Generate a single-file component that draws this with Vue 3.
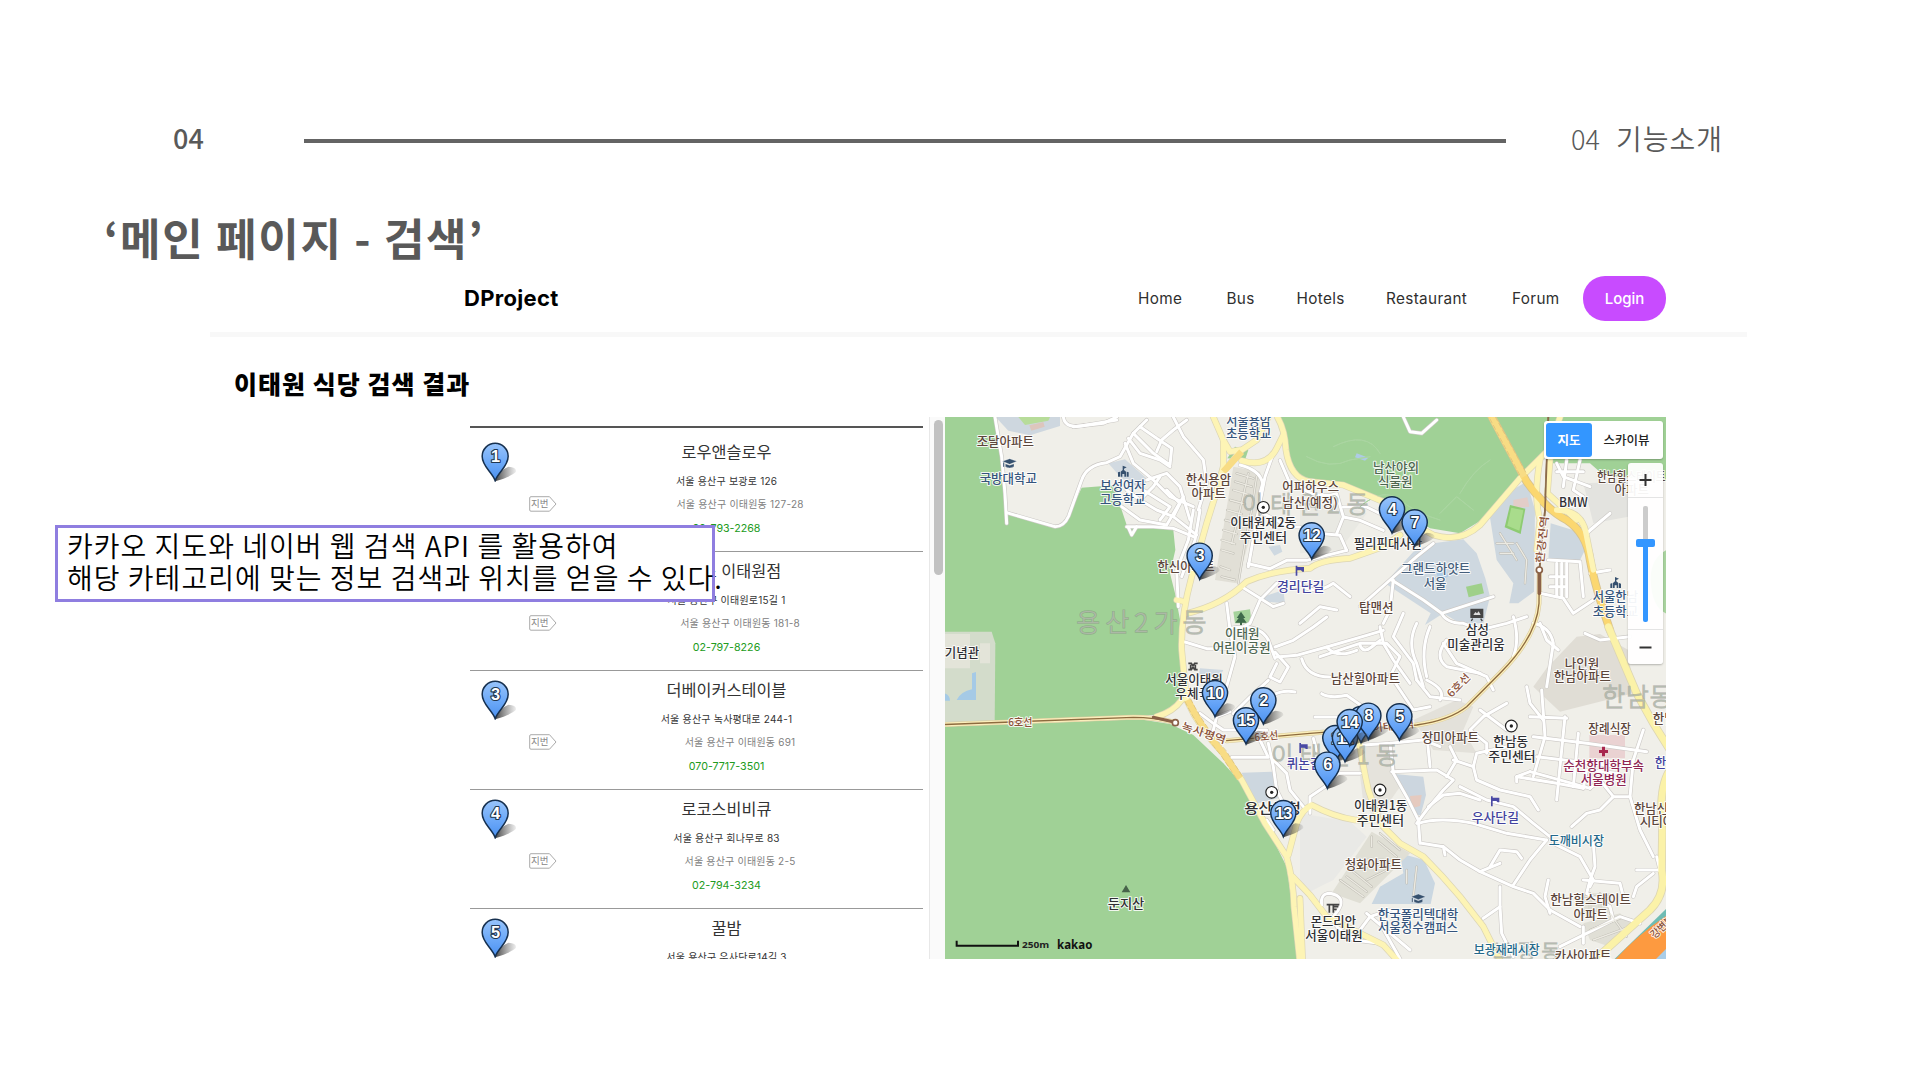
<script setup>
const nav = ['Home', 'Bus', 'Hotels', 'Restaurant', 'Forum']

const places = [
  { n: 1, name: '로우앤슬로우', road: '서울 용산구 보광로 126', lot: '서울 용산구 이태원동 127-28', tel: '02-793-2268' },
  { n: 2, name: '바토스 이태원점', road: '서울 용산구 이태원로15길 1', lot: '서울 용산구 이태원동 181-8', tel: '02-797-8226' },
  { n: 3, name: '더베이커스테이블', road: '서울 용산구 녹사평대로 244-1', lot: '서울 용산구 이태원동 691', tel: '070-7717-3501' },
  { n: 4, name: '로코스비비큐', road: '서울 용산구 회나무로 83', lot: '서울 용산구 이태원동 2-5', tel: '02-794-3234' },
  { n: 5, name: '꿀밤', road: '서울 용산구 우사단로14길 3' }
]

// The map is drawn on several tiles; each tile has its own local origin.
const tiles = { a: 'translate(0 0)', b: 'translate(1080 0)', c: 'translate(0 810)', d: 'translate(1080 810)', e: 'translate(720 621)', f: 'translate(720 21)' }

const areas = [
  ['a', '#a0d196', 'M0 0H165L190 220L200 305L345 350Q370 350 385 320L425 233L530 225L545 300L560 345L640 348L700 360L706 420L690 490L705 550L722 640L728 870Q715 905 640 915L0 945Z'],
  ['c', '#a0d196', 'M0 140L600 118L690 132L760 165L850 250L905 310L980 440L1040 560L1060 700L1072 860H0Z'],
  ['a', '#d3dccb', 'M0 665H155L166 700L164 938L0 942Z'],
  ['a', '#e3e4d9', 'M14 672H90V775H14ZM120 700H150V760H120Z'],
  ['a', '#a5cae6', 'M96 790L108 786V870H50Q62 845 96 838ZM14 850Q30 855 30 872H14Z'],
  ['b', '#a0d196', 'M-65 0L-35 140L0 200L140 222L240 262L390 355L480 370L545 330L670 195L735 120L760 0Z'],
  ['b', '#a0d196', 'M740 0H1110V215L910 195L870 160H740Z'],
  ['b', '#a9d49f', 'M1110 415Q1050 440 1052 510Q1055 600 1110 615Z'],
  ['a', '#ced7df', 'M167 21H360V48L270 76L205 62Z'],
  ['a', '#b7dc9a', 'M235 21H330L325 32L255 45Z'],
  ['a', '#ddc6bd', 'M268 46L310 36L314 50L274 62Z'],
  ['a', '#d2dae1', 'M505 160L555 148L625 210L600 235L545 205Z'],
  ['a', '#a0d196', 'M862 145L885 110L925 120L915 150Z'],
  ['a', '#e1dfd6', 'M880 170L960 185L975 230L890 520L825 510Z'],
  ['a', '#cfd9e1', 'M985 410L1020 405L1027 425L1003 437ZM970 560L1030 540L1035 580L975 575ZM780 775L850 780L840 800L775 800Z'],
  ['a', '#a5d39b', 'M880 605L930 598L935 640L885 640Z'],
  ['b', '#cdd7df', 'M620 250L680 215L705 300L702 545L655 580H628L640 520L590 450L568 310Z'],
  ['b', '#e3cdc8', 'M640 270L682 262L688 290L640 295Z'],
  ['b', '#8ecb72', 'M630 285L676 296L662 372L614 352Z'],
  ['b', '#a9dc8c', 'M634 293L670 301L658 362L622 347Z'],
  ['b', '#cdd7df', 'M752 340L850 370L860 410L840 450H745Z'],
  ['b', '#ced8e0', 'M340 425L400 400L490 388L530 430L556 505L570 560L550 640L480 640L430 610L375 645L392 610L255 520Z'],
  ['b', '#9fd08a', 'M498 530L545 520L552 550L506 562Z'],
  ['b', '#aecbe6', 'M410 490L438 478L445 500L415 512ZM170 130L205 143L195 152L165 142Z'],
  ['b', '#e0ddd5', 'M740 775L830 680L900 672L985 720L1000 850L780 905L700 830Z'],
  ['b', '#e3e3df', 'M850 220L990 215L985 320L880 340Z'],
  ['b', '#e9e9e3', 'M0 290L110 280L200 310L120 420L0 430Z'],
  ['d', '#e3e1da', 'M340 120L470 60L520 80L490 150L530 220L400 210Z'],
  ['d', '#e5e3dc', 'M170 200L190 370L230 420L300 320L270 190Z'],
  ['c', '#cdd7df', 'M905 278L1000 275L1014 355L945 372Z'],
  ['d', '#ccd6df', 'M285 282L370 290L378 345L362 405H345Z'],
  ['d', '#e5cabf', 'M330 348L365 345L360 378L335 385Z'],
  ['d', '#cad7e1', 'M300 520L372 540L405 610L392 672H215L240 620L310 580Z'],
  ['d', '#e0dfd5', 'M215 455L330 520L180 670L95 640Z'],
  ['d', '#ead2d2', 'M868 165H975V235H868Z'],
  ['d', '#e0dfd6', 'M850 640H930V700H850ZM850 730L960 700L1010 740L930 800L870 780Z'],
  ['d', '#e9e9e6', 'M0 400L150 425L200 470L100 600L20 640L0 600Z'],
  ['d', '#6fbcb4', 'M920 860L1110 675V860Z'],
  ['d', '#fd9a40', 'M928 860Q1000 770 1110 700V860Z'],
  ['d', '#a9cde8', 'M1045 860L1110 795V860Z']
]

// [tile, kind, path]
const roads = [
  // narrow streets, north-west
  ['a', 's', 'M165 21L185 140L195 250L200 340'], ['a', 's', 'M200 308L345 350Q372 350 386 318L425 210Q440 165 500 158L540 140L580 70L620 30'],
  ['a', 's', 'M370 21Q375 60 440 45L530 30'], ['a', 's', 'M530 21L490 40L400 50'],
  ['a', 's', 'M565 85L600 130L660 150L690 170'], ['a', 's', 'M580 70L640 130L690 165L695 115L650 85L600 50'],
  ['a', 's', 'M650 125L665 90L700 60L740 30'], ['a', 's', 'M700 21L730 80L790 150L800 220L775 300'],
  ['a', 's', 'M555 100L580 160L640 210L690 260L760 290'], ['a', 's', 'M620 210L680 190L720 230L750 330'],
  ['a', 's', 'M560 240L600 270L640 230L660 200'], ['a', 's', 'M600 270L650 300L700 320L720 280L680 240'],
  ['a', 's', 'M545 290L600 330L680 345L730 260'], ['a', 's', 'M560 350L640 350L700 355L760 380'], ['a', 's', 'M565 352L575 375L590 350'],
  ['a', 's', 'M610 240L690 290L660 330'], ['a', 's', 'M700 320L770 375'], ['a', 's', 'M760 300L745 390L710 480L715 590'],
  ['a', 's', 'M780 300L765 390L725 500'], ['a', 's', 'M1000 130L975 200L950 330L925 470'], ['a', 's', 'M900 165Q960 180 968 220L960 250'],
  // apartment rows
  ['a', 't', 'M890 190L940 205M885 215L935 230M880 240L930 255M870 270L915 282M862 300L905 312M855 330L900 342M850 360L890 372M845 390L885 402M845 420L880 430M842 470L870 480M845 500L885 510'],
  ['a', 't', 'M925 190L900 300L875 400M950 200L935 300L915 400L895 520'],
  // centre-north
  ['f', 's', 'M205 440L270 455L320 430L380 430L500 400'], ['f', 's', 'M250 290L330 330L360 330M430 350L480 355L500 400'], ['f', 's', 'M350 200Q400 250 470 230L490 300L470 350'],
  ['f', 's', 'M490 300L540 310L610 340'], ['f', 's', 'M490 270L560 270L620 300'], ['f', 's', 'M300 130L330 200'],
  ['a', 's', 'M905 530L960 565L1000 590L1030 580'], ['a', 's', 'M1010 520L960 570L930 640L900 655'], ['a', 's', 'M860 580L870 660L885 740L860 830'],
  ['a', 's', 'M870 655Q960 640 985 690L1005 745'],
  ['e', 's', 'M15 75L80 95L150 95'], ['e', 's', 'M285 90L340 70L400 30L440 0'], ['e', 's', 'M290 120L350 115L440 90L560 55L610 40'], ['e', 's', 'M285 105L325 150L300 195L270 180L290 140'],
  ['e', 's', 'M160 290L210 240L265 190'], ['e', 's', 'M250 250Q300 215 345 225'], ['e', 's', 'M440 90Q470 125 530 100'], ['e', 's', 'M365 125Q380 180 450 180'],
  ['e', 's', 'M425 230Q450 245 500 235L550 270'], ['e', 's', 'M405 300H470'], ['e', 's', 'M540 85Q550 110 575 90L600 70'],
  ['b', 's', 'M180 590L270 510L350 440L400 400'], ['b', 's', 'M275 510L370 570L425 610L580 560'], ['b', 's', 'M60 740L180 700L260 700L300 740L270 800'],
  ['b', 's', 'M0 640L60 590L110 600M240 650L250 700L280 750L330 820'], ['b', 's', 'M250 640L270 600L280 510'], ['b', 's', 'M310 610L280 680L340 760L350 810'],
  ['b', 's', 'M350 640Q320 700 350 760L370 830'], ['b', 's', 'M390 650Q360 720 380 800'], ['b', 's', 'M425 610Q440 640 490 640L540 660L620 640L680 620'],
  ['b', 's', 'M430 700L470 760L560 800L580 840'], ['b', 's', 'M440 690Q400 740 440 770L540 790'], ['b', 's', 'M640 620Q660 690 640 740'], ['b', 's', 'M720 640L740 690L775 720'],
  ['b', 's', 'M720 550L790 565L820 610L880 570'], ['b', 's', 'M700 640Q750 650 760 700L740 830'], ['b', 's', 'M0 520Q40 560 100 520L150 560'],
  ['b', 's', 'M745 450L840 455L850 560'], ['b', 's', 'M770 460V560M785 460V560M800 460V560M750 500H800M750 530H800'],
  ['b', 's', 'M770 160L790 200L870 230M800 150L790 230M840 150L820 240L850 260M770 185H850'], ['b', 's', 'M860 370L930 310L870 360M870 490L930 480'],
  ['b', 's', 'M855 670L900 690L990 680'], ['b', 's', 'M310 21L330 65L365 70L410 30'],
  ['b', 't', 'M600 430H640M590 400H640M600 370L650 450M650 400L680 450L675 520'],
  ['b', 'g', 'M20 140Q90 180 150 150L210 140M180 290Q250 230 300 270T420 330M420 310L470 260L520 300M480 250Q520 180 570 150M100 110Q200 60 240 130'],
  // centre
  ['c', 's', 'M780 100L820 130L850 150L980 150'], ['c', 's', 'M820 150L830 110L870 95'],
  ['c', 's', 'M875 232H985L960 180L950 150'], ['c', 's', 'M985 190L1000 260L1010 330L1040 390'], ['c', 's', 'M1000 240L1040 280L1050 330L1090 380'], ['c', 's', 'M980 420L1000 450'],
  ['c', 's', 'M1120 175L1135 230'],
  ['d', 's', 'M30 400L30 350L90 310'], ['d', 's', 'M100 280H180'], ['d', 's', 'M190 195L270 190L370 180L420 200'],
  ['d', 's', 'M280 0L340 90L390 80'], ['d', 's', 'M350 0L390 50L480 60'], ['d', 's', 'M380 0Q440 30 420 60'], ['d', 's', 'M380 160L390 260M450 200L470 240L440 290'],
  ['d', 's', 'M275 275L410 270L460 300L430 330L380 390L350 430'], ['d', 's', 'M270 190L280 280L320 350L355 420L360 490'], ['d', 's', 'M460 240L520 260L530 220L620 200'],
  ['d', 's', 'M520 260L530 300L600 330L690 350L715 390'], ['d', 's', 'M385 380L430 345L480 340L540 360'], ['d', 's', 'M480 320L560 360L640 380L700 430L750 470'],
  ['d', 's', 'M355 430Q420 410 520 430L620 460L740 480'], ['d', 's', 'M365 490L430 500L435 525'], ['d', 's', 'M430 500L480 540L540 575L600 550'],
  ['d', 's', 'M540 575L640 620L700 640L750 690L840 740'], ['d', 's', 'M570 560L600 510L650 515L665 535'], ['d', 's', 'M740 480L690 540L640 615'],
  ['d', 's', 'M600 620L600 680L550 715'], ['d', 's', 'M600 680L605 760L640 830'], ['d', 's', 'M745 600L735 650L750 700'],
  ['d', 's', 'M760 490L840 530L880 600L870 620'], ['d', 's', 'M880 490L885 560L870 600'], ['d', 's', 'M850 600L960 610L970 650'], ['d', 's', 'M870 600L860 640L930 680L940 720'],
  ['d', 's', 'M700 170L860 190L1040 215'], ['d', 's', 'M710 230L1000 265'], ['d', 's', 'M690 275L870 325'], ['d', 's', 'M650 290L770 310L850 325'], ['d', 's', 'M650 305V290L690 275'],
  ['d', 's', 'M725 30L735 170L700 290M795 110L770 360M835 160L820 320M690 110L800 115'], ['d', 's', 'M680 20L690 70L730 120'],
  ['d', 's', 'M870 325L900 300L940 350H990L1000 240L1030 150'], ['d', 's', 'M940 350L900 390L860 400L815 440'], ['d', 's', 'M990 350L1020 450L1060 530'],
  ['d', 's', 'M850 325L860 270L950 280'], ['d', 's', 'M1010 570H1080L1070 530'], ['d', 's', 'M1060 580L1010 620L1000 650'],
  ['d', 's', 'M780 800L860 760L960 710L1020 730'], ['d', 's', 'M850 740L850 790'], ['d', 's', 'M620 70L550 110L510 150L560 190L560 220'], ['d', 's', 'M540 90L620 150'],
  ['d', 's', 'M65 675Q60 640 90 640Q140 650 115 690L100 710'], ['d', 's', 'M110 740L160 780L240 790'], ['d', 's', 'M180 750L210 710L270 690L340 700'], ['d', 's', 'M200 700L330 810M240 730L300 836'],
  ['d', 't', 'M215 470V500M240 460L300 510M235 485L290 530M200 540L250 540L260 570L200 600M120 600L190 650M140 590L200 635M160 575L215 620M320 570L320 610M350 560L340 650'],
  ['d', 't', 'M855 650H925M870 640V700M900 640V700M870 750L960 715M880 780L990 740M930 700L980 770'],
  // avenues
  ['c', 'y', 'M650 110Q700 95 725 60'],
  ['a', 'y', 'M733 805L725 720Q722 620 755 500L800 340L825 260L850 170V90L820 21'],
  ['a', 'y', 'M850 90L870 125L900 120M850 185L905 120L950 90L985 21'], ['a', 'y', 'M905 152Q980 175 1010 115L1030 75'],
  ['a', 'y', 'M1012 21Q1035 60 1038 120Q1050 205 1110 215L1210 225L1330 275Q1420 345 1480 375Q1560 400 1620 345L1740 205L1830 115L1860 21'],
  ['a', 'y', 'M735 612Q850 585 920 515Q1000 480 1110 475Q1140 450 1230 445L1330 410L1380 375'],
  ['a', 'y', 'M710 570L735 575'],
  ['c', 'y', 'M733 -5L740 60Q780 150 850 220L905 300L975 430L1040 530Q1060 600 1062 680L1080 850'],
  ['c', 'y', 'M1045 525L1070 430Q1085 390 1115 375Q1180 410 1245 420L1290 420'],
  ['c', 'y', 'M1058 590L1110 645L1160 710L1250 755L1330 795L1380 850'],
  ['d', 'y', 'M172 150Q185 240 205 330L240 430L300 490L370 530Q430 590 480 650L550 740L605 850'],
  ['d', 'y', 'M0 655L8 850'],
  ['d', 'Y', 'M1110 270Q1075 320 1087 450L1085 570Q1100 640 1050 690L900 825'],
  ['b', 'y', 'M750 150L742 250L830 330'], ['b', 'y', 'M720 150Q700 260 720 330L710 420'],
  ['b', 'o', 'M570 10L680 215Q740 300 800 330Q860 370 870 450Q885 530 930 660'], ['b', 'y', 'M770 300Q850 300 860 380L880 480'],
  ['b', 'Y', 'M925 650L1010 850L1060 940L1110 1020'],
  // metro line 6
  ['c', 'm', 'M0 134L580 112Q640 112 705 127'], ['c', 'm', 'M860 182L1110 160L1430 135Q1530 120 1580 80L1680 -20Q1790 -130 1797 -230L1798 -330'],
  ['b', 'M', 'M718 550V480L735 300L745 21']
]
const style = {
  s: { c: '#cbc8c5', w: 12.5, f: '#ffffff', i: 9 },
  t: { c: '#bdbbb2', w: 7, f: '#eceae2', i: 4 },
  g: { c: '#abd6a2', w: 3, f: '#abd6a2', i: 3 },
  y: { c: '#dcd5b4', w: 20, f: '#fdf4b5', i: 16 },
  Y: { c: '#dcd5b4', w: 25, f: '#fbf2a8', i: 20 },
  o: { c: '#d6c28e', w: 25, f: '#fbd770', i: 20 },
  m: { c: '#d9cb9e', w: 15, f: '#fbeebb', i: 12 },
  M: { c: '#8b6a4a', w: 5, f: '#8b6a4a', i: 5 }
}
const metro = [
  ['c', 'M0 134L580 112Q640 112 705 127'],
  ['c', 'M860 182L1110 160L1430 135Q1530 120 1580 80L1680 -20Q1790 -130 1797 -230L1798 -330']
]

// [tile, text, centre x, baseline y, width, colour class, size]
const labels = [
  ['a', '조달아파트', 196, 109, 172, 'brown'], ['a', '국방대학교', 205, 222, 172, 'navy'],
  ['a', '보성여자', 549, 243, 136, 'navy'], ['a', '고등학교', 548, 284, 136, 'navy'],
  ['a', '서울용암', 926, 46, 134, 'navy'], ['a', '초등학교', 926, 85, 136, 'navy'],
  ['a', '한신용암', 805, 225, 136, 'brown'], ['a', '아파트', 806, 267, 103, 'brown'],
  ['a', '이태원제2동', 970, 352, 198, 'dark'], ['a', '주민센터', 970, 397, 142, 'dark'],
  ['a', '한신아파트', 738, 484, 172, 'brown'], ['a', '경리단길', 1082, 545, 142, 'violet'],
  ['a', '이태원', 907, 687, 104, 'olive'], ['a', '어린이공원', 905, 729, 174, 'olive'],
  ['a', '기념관', 66, 742, 103, 'dark'], ['a', '서울이태원', 762, 825, 172, 'dark'], ['c', '우체국', 758, 57, 104, 'dark'],
  ['a', '어퍼하우스', 1112, 246, 170, 'brown'], ['a', '남산(예정)', 1110, 293, 166, 'brown'],
  ['b', '남산야외', 288, 187, 138, 'olive'], ['b', '식물원', 286, 231, 104, 'olive'],
  ['b', '필리핀대사관', 264, 417, 206, 'dark'], ['b', '그랜드하얏트', 407, 491, 208, 'slate'], ['b', '서울', 405, 536, 68, 'slate'],
  ['b', '탑맨션', 229, 609, 104, 'brown'], ['b', '삼성', 532, 675, 70, 'dark'], ['b', '미술관리움', 528, 719, 172, 'dark'],
  ['b', '남산힐아파트', 196, 822, 208, 'brown'], ['b', 'BMW', 820, 293, 86, 'dark'],
  ['b', '한남힐스테이트', 994, 215, 206, 'brown'], ['b', '아파트', 995, 255, 103, 'brown'],
  ['b', '서울한남', 946, 576, 136, 'navy'], ['b', '초등학교', 946, 619, 136, 'navy'],
  ['b', '나인원', 846, 775, 104, 'brown'], ['b', '한남아파트', 847, 816, 172, 'brown'],
  ['c', '용산구청', 998, 400, 170, 'dark', 42], ['c', '퀴논길', 1092, 266, 104, 'violet'], ['c', '둔지산', 558, 686, 110, 'dark'],
  ['d', '장미아파트', 451, 188, 172, 'brown'], ['d', '한남동', 632, 200, 104, 'dark'], ['d', '주민센터', 636, 245, 142, 'dark'],
  ['d', '장례식장', 929, 160, 128, 'brown'], ['d', '순천향대학부속', 911, 271, 242, 'wine'], ['d', '서울병원', 911, 313, 138, 'wine'],
  ['d', '이태원1동', 242, 391, 160, 'dark'], ['d', '주민센터', 241, 436, 142, 'dark'], ['d', '우사단길', 586, 427, 142, 'violet'],
  ['d', '도깨비시장', 829, 496, 166, 'teal'], ['d', '청화아파트', 220, 568, 172, 'brown'],
  ['d', '몬드리안', 100, 740, 136, 'dark'], ['d', '서울이태원', 102, 783, 172, 'dark'],
  ['d', '한국폴리텍대학', 354, 719, 242, 'navy'], ['d', '서울정수캠퍼스', 354, 759, 240, 'navy'],
  ['d', '한남힐스테이트', 872, 674, 242, 'brown'], ['d', '아파트', 872, 718, 103, 'brown'],
  ['d', '보광재래시장', 620, 823, 198, 'teal'], ['d', '카사아파트', 849, 841, 170, 'brown'],
  ['d', '한남시', 1110, 132, 104, 'brown'], ['d', '한빛길', 1116, 264, 104, 'violet'], ['d', '한남신동', 1070, 401, 136, 'brown'], ['d', '시티아파트', 1106, 441, 174, 'brown']
]
const districts = [
  ['a', '용산2가동', 604, 665, 390, 78], ['a', '이태원2동', 1095, 308, 380, 70], ['c', '이태원1동', 1184, 252, 380, 72],
  ['d', '한남동', 1012, 78, 210, 74], ['d', '보광동', 680, 836, 200, 60]
]
const metroNames = [
  ['c', '6호선', 241, 137, 72, 0], ['c', '녹사평역', 788, 170, 138, 18], ['c', '6호선', 980, 180, 72, -6],
  ['d', '6호선', 484, 24, 84, -46], ['b', '한강진역', 738, 390, 142, -84], ['d', '이태원역', 281, 149, 126, -6], ['d', '강변북로', 1104, 740, 110, -42]
]
const pins = [
  [779, 508, 3], [1115, 447, 12], [1356, 369, 4], [1424, 408, 7], [825, 920, 10], [970, 942, 2], [918, 1002, 15],
  [1378, 990, 5], [1263, 998, 9], [1285, 988, 8], [1186, 1055, 1], [1215, 1055, 11], [1229, 1007, 14], [1162, 1135, 6], [1030, 1280, 13]
]
const offices = [['a', 970, 292], ['c', 995, 337], ['d', 634, 138], ['d', 240, 330]]
const pinPath = 'M0 0C-10 -27 -39 -42 -39 -73A39 39 0 0 1 39 -73C39 -42 10 -27 0 0Z'
</script>

<template>
  <main class="slide">
    <header class="slide-head">
      <span class="page-no">04</span>
      <span class="rule"></span>
      <span class="chapter"><i>04</i>기능소개</span>
    </header>
    <h1 class="slide-title">‘메인 페이지 - 검색’</h1>

    <section class="site">
      <div class="topbar">
        <strong class="brand">DProject</strong>
        <nav class="menu">
          <a v-for="(item, k) in nav" :key="item" :class="'n' + k">{{ item }}</a>
        </nav>
        <button class="login">Login</button>
      </div>
      <h2 class="result-title">이태원 식당 검색 결과</h2>

      <div class="content">
        <ul class="places">
          <li v-for="p in places" :key="p.n" class="place">
            <svg class="pin" viewBox="-42 -116 110 120">
              <defs>
                <linearGradient id="pin-blue" x1="0" y1="0" x2="0" y2="1">
                  <stop offset="0" stop-color="#98c4fb" /><stop offset=".55" stop-color="#6ba8f8" /><stop offset="1" stop-color="#4a90f0" />
                </linearGradient>
                <linearGradient id="pin-shade" x1="0" y1="0" x2="1" y2="0">
                  <stop offset="0" stop-color="#222" stop-opacity=".85" /><stop offset="1" stop-color="#555" stop-opacity=".1" />
                </linearGradient>
              </defs>
              <path d="M0 2Q8 -30 40 -42Q66 -40 62 -26Q48 -12 0 2Z" fill="url(#pin-shade)" />
              <path :d="pinPath" class="pin-body" />
              <text x="0" y="-55" class="pin-no">{{ p.n }}</text>
            </svg>
            <div class="name">{{ p.name }}</div>
            <div class="road">{{ p.road }}</div>
            <div v-if="p.lot" class="lot-row">
              <span class="lot-tag">
                <svg viewBox="0 0 28 16"><path d="M2 .7H20.5L27 8L20.5 15.2H2Q.7 15.2 .7 14V2Q.7 .7 2 .7Z" /></svg>
                <em>지번</em>
              </span>
              <span class="lot">{{ p.lot }}</span>
            </div>
            <div v-if="p.tel" class="tel">{{ p.tel }}</div>
          </li>
        </ul>
        <div class="scroll"><span class="thumb"></span></div>

        <div class="map">
          <svg class="canvas" viewBox="15 21 2163 1626" preserveAspectRatio="none">
            <rect x="0" y="0" width="2200" height="1700" fill="#f0efe9" />
            <path v-for="(r, k) in areas" :key="'ar' + k" :transform="tiles[r[0]]" :fill="r[1]" :d="r[2]" />
            <g fill="none" stroke-linejoin="round" stroke-linecap="round">
              <path v-for="(r, k) in roads" :key="'rc' + k" :transform="tiles[r[0]]" :d="r[2]" :stroke="style[r[1]].c" :stroke-width="style[r[1]].w" />
              <path v-for="(r, k) in roads" :key="'rf' + k" :transform="tiles[r[0]]" :d="r[2]" :stroke="style[r[1]].f" :stroke-width="style[r[1]].i" />
              <path v-for="(r, k) in metro" :key="'me' + k" :transform="tiles[r[0]]" :d="r[1]" stroke="#8d6b3f" stroke-width="4" />
              <path transform="translate(0 810)" d="M640 112L705 127" stroke="#8b6248" stroke-width="9" />
              <path transform="translate(1080 0)" d="M718 480V550" stroke="#8b6248" stroke-width="11" />
              <path d="M1655 21L1752 200M743 870Q780 950 850 1030L900 1105M850 185L905 125" stroke="#f8dc84" stroke-width="20" stroke-linecap="butt" />
              <path d="M1650 27L1742 200M1666 21L1762 195M735 875Q775 955 842 1035L892 1110M752 867Q790 945 858 1022L908 1100" stroke="#dcc27c" stroke-width="2.5" stroke-dasharray="13 9" />
            </g>
            <g class="station">
              <circle cx="706" cy="938" r="9" /><circle cx="1798" cy="480" r="9" />
            </g>

            <text v-for="(l, k) in districts" :key="'di' + k" :transform="tiles[l[0]]" :x="l[2]" :y="l[3]" :textLength="l[4]" class="district" :font-size="l[5]">{{ l[1] }}</text>
            <text v-for="(l, k) in metroNames" :key="'mn' + k" :transform="tiles[l[0]] + ' translate(' + l[2] + ' ' + l[3] + ') rotate(' + l[5] + ')'" :textLength="l[4]" lengthAdjust="spacingAndGlyphs" class="label metro">{{ l[1] }}</text>
            <text v-for="(l, k) in labels" :key="'la' + k" :transform="tiles[l[0]]" :x="l[2]" :y="l[3] - 2" :textLength="l[4]" lengthAdjust="spacingAndGlyphs" :font-size="l[6] || 38" :class="['label', l[5]]">{{ l[1] }}</text>

            <g v-for="(o, k) in offices" :key="'of' + k" :transform="tiles[o[0]]">
              <circle :cx="o[1]" :cy="o[2]" r="17.5" fill="#fff" stroke="#222" stroke-width="3.5" /><circle :cx="o[1]" :cy="o[2]" r="5" fill="#222" />
            </g>
            <!-- colleges -->
            <g v-for="t in ['translate(209 160)', 'translate(1435 1466)']" :key="t" :transform="t" fill="#35506e" stroke="#fff" stroke-width="1">
              <path d="M0 -14L22 -6L0 3L-22 -6Z" /><path d="M-13 1L0 6L13 1V10Q0 18 -13 10ZM-20 -3H-16V11H-20Z" />
            </g>
            <!-- schools -->
            <g v-for="t in ['translate(550 185)', 'translate(2027 519)']" :key="t" :transform="t" fill="#35506e">
              <path d="M-2 -18L10 -13L2 -9V-5L8 0V15H3V7H-3V15H-8V0L-2 -5ZM-16 2L-10 0V15H-16ZM16 2L10 0V15H16Z" />
            </g>
            <!-- themed streets -->
            <g v-for="t in ['translate(1079 482)', 'translate(1090 1014)', 'translate(1665 1174)']" :key="t" :transform="t" fill="#4a4aa5">
              <path d="M-12 -15H-7V-11H13V3H8L4 -1H-7V15H-12Z" />
            </g>
            <path d="M903 605L916 624H910L920 638H906V645H900V638H886L896 624H890Z" fill="#3f6a4b" />
            <path d="M558 1425L571 1447H545Z" fill="#47634a" />
            <path d="M1986 1010H1995V1020H2004V1029H1995V1039H1986V1029H1977V1020H1986Z" fill="#a8264e" />
            <path d="M1593 598H1628V622H1593ZM1598 626L1594 633M1622 626L1627 633" fill="#444" stroke="#444" stroke-width="4" />
            <path d="M1600 615L1606 606L1611 610L1616 604L1622 615Z" fill="#ddd" />
            <path d="M745 760H754L759 768L764 760H773M745 779H754L759 771L764 779H773M752 764V776M766 764V776" fill="none" stroke="#444" stroke-width="5" />
            <path d="M1160 1484H1198M1168 1484V1508M1178 1490H1195M1178 1498H1190M1180 1484V1508" fill="none" stroke="#444" stroke-width="5" />

            <g v-for="p in pins" :key="'pin' + p[2]" :transform="'translate(' + p[0] + ' ' + p[1] + ')'">
              <path d="M0 2Q8 -30 36 -40Q62 -38 60 -26Q46 -12 0 2Z" fill="url(#pin-shade)" />
              <path :d="pinPath" class="pin-body" transform="scale(.97)" />
              <text x="0" y="-54" class="pin-no">{{ p[2] }}</text>
            </g>

            <path d="M50 1592V1607H234V1592" fill="none" stroke="#111" stroke-width="6" />
            <text x="287" y="1613" class="scale-text" textLength="82" lengthAdjust="spacingAndGlyphs">250m</text>
            <text x="404" y="1617" class="kakao" textLength="106" lengthAdjust="spacingAndGlyphs">kakao</text>
          </svg>

          <div class="map-type"><b>지도</b><span>스카이뷰</span></div>
          <div class="zoom">
            <svg class="btn" viewBox="0 0 34 34"><path d="M11 17H23M17 11V23" /></svg>
            <div class="slider"><span class="done"></span><span class="knob"></span></div>
            <svg class="btn" viewBox="0 0 34 34"><path d="M11 17.5H23" /></svg>
          </div>
        </div>
      </div>
    </section>

    <aside class="callout"><p>카카오 지도와 네이버 웹 검색 API 를 활용하여</p><p>해당 카테고리에 맞는 정보 검색과 위치를 얻을 수 있다.</p></aside>
  </main>
</template>

<style>
body { margin: 0; background: #fff; }
</style>

<style scoped>
* { box-sizing: border-box; }
.slide { position: relative; width: 1920px; height: 1080px; overflow: hidden; background: #fff; font-family: "Noto Sans CJK KR", "Noto Sans", sans-serif; }

.slide-head { display: flex; align-items: center; height: 60px; margin-top: 111px; padding-left: 173px; color: #595959; }
.page-no { width: 131px; height: 66px; font-size: 27px; font-weight: 500; line-height: 60px; }
.rule { width: 1202px; height: 4px; background: #646464; }
.chapter { height: 66px; margin-left: 65px; font-size: 28px; font-weight: 350; letter-spacing: 1px; line-height: 60px; white-space: pre; }
.chapter i { margin-right: 16px; font-size: 27px; font-style: normal; font-weight: 200; letter-spacing: 0; }
.slide-title { margin: 26px 0 0 104px; height: 76px; line-height: 80px; font-size: 44px; font-weight: 700; letter-spacing: 1.7px; color: #595959; white-space: pre; }

.site { width: 1537px; margin-left: 210px; font-family: Inter, "Noto Sans CJK KR", sans-serif; }
.topbar { display: flex; align-items: center; height: 64px; margin-bottom: 35px; padding: 0 0 9px 254px; border-bottom: 5px solid #f8f8f8; }
.brand { width: 674px; font-size: 22px; font-weight: 700; letter-spacing: .3px; color: #000; }
.menu { display: flex; width: 445px; font-size: 15.3px; letter-spacing: .35px; color: #2f2f2f; }
.menu a { flex: none; }
.n0 { width: 88.5px; } .n1 { width: 70px; } .n2 { width: 89.5px; } .n3 { width: 126px; } .n4 { width: 60px; }
.login { width: 83px; height: 45px; padding: 0; border: 0; border-radius: 22px; background: #c84bff; color: #fff; font: 500 15px Inter, sans-serif; }
.result-title { margin: 0 0 0 24px; height: 45px; line-height: 22px; font-family: "Noto Sans CJK KR", sans-serif; font-size: 25px; font-weight: 900; letter-spacing: 1px; color: #000; white-space: pre; }

.content { display: flex; height: 542px; margin-left: 260px; overflow: hidden; }
.places { width: 453px; margin: 9px 6px 0 0; padding: 5px 0 0; list-style: none; border-top: 2px solid #555; }
.place { position: relative; height: 119.1px; padding-top: 8px; border-bottom: 1.5px solid #999; text-align: center; white-space: nowrap; }
.pin { position: absolute; left: 11px; top: 9px; width: 37px; height: 40px; }
.name { padding-left: 60px; line-height: 22px; font-size: 16.3px; font-weight: 400; color: #333; }
.road { margin-top: 9px; padding-left: 60px; line-height: 18px; font-size: 10px; letter-spacing: .2px; color: #333; }
.lot-row { display: flex; align-items: center; height: 16px; margin-top: 6px; padding-left: 59px; }
.lot-tag { position: relative; width: 28px; height: 16px; }
.lot-tag svg { display: block; width: 28px; height: 16px; }
.lot-tag path { fill: #fff; stroke: #aaa; }
.lot-tag em { position: absolute; left: 2px; top: 0; font-size: 9.5px; line-height: 15px; font-style: normal; color: #888; }
.lot { width: 366px; font-size: 10px; line-height: 16px; letter-spacing: .2px; color: #808080; }
.tel { margin-top: 8px; padding-left: 60px; font-size: 10.7px; line-height: 18px; color: #219b21; }
.scroll { width: 16px; padding: 3px 0 0 4px; background: #fafafa; border-left: 1px solid #e8e8e8; }
.thumb { display: block; width: 9px; height: 155px; border-radius: 5px; background: #c1c1c1; }

.map { position: relative; width: 721px; height: 542px; overflow: hidden; }
.canvas { display: block; width: 721px; height: 542px; }
.pin-body { fill: url(#pin-blue); stroke: #16304f; stroke-width: 4.5; }
.pin-no { font-family: "Liberation Sans", Arial, sans-serif; font-size: 49px; font-weight: 700; text-anchor: middle; fill: #fff; stroke: #20364f; stroke-width: 6.5; stroke-linejoin: round; paint-order: stroke; letter-spacing: -2px; }
.label { font-family: "Noto Sans CJK KR", sans-serif; font-weight: 500; text-anchor: middle; stroke: rgba(255, 255, 255, .85); stroke-width: 6; stroke-linejoin: round; paint-order: stroke; }
.brown { fill: #5c463b; } .navy { fill: #35547c; } .dark { fill: #2f2f33; } .violet { fill: #43439e; }
.olive { fill: #4e6651; } .slate { fill: #465f7c; } .wine { fill: #8f2452; } .teal { fill: #23688a; }
.metro { font-size: 32px; fill: #8b523a; }
.station { fill: #fff; stroke: #8b6248; stroke-width: 5; }
.district { font-family: "Noto Sans CJK KR", sans-serif; font-weight: 300; text-anchor: middle; fill: #b4bcae; fill-opacity: .8; stroke: #7d837b; stroke-opacity: .45; stroke-width: 4; paint-order: stroke; }
.scale-text { font: 700 26px "Open Sans", sans-serif; text-anchor: middle; fill: #222; }
.kakao { font: 700 37px "Open Sans", sans-serif; text-anchor: middle; fill: #111; }

.map-type { position: absolute; top: 4px; right: 3px; display: flex; width: 119px; height: 38px; padding: 2px; border-radius: 3px; background: #fff; box-shadow: 0 1px 2px rgba(0, 0, 0, .25); font-size: 12.5px; line-height: 33px; text-align: center; font-family: "Noto Sans CJK KR", sans-serif; color: #222; }
.map-type b { width: 46px; border-radius: 3px; background: #3396ff; color: #fff; font-weight: 700; }
.map-type span { flex: 1; font-weight: 500; }
.zoom { position: absolute; top: 46px; right: 3px; display: flex; flex-direction: column; width: 35px; height: 201px; border-radius: 3px; background: rgba(255, 255, 255, .94); box-shadow: 0 1px 2px rgba(0, 0, 0, .25); }
.btn { width: 35px; height: 34px; }
.btn path { stroke: #333; stroke-width: 2; fill: none; }
.slider { position: relative; flex: 1; border: solid #e4e4e4; border-width: 1px 0; }
.slider::before { content: ""; position: absolute; left: 15px; top: 8px; width: 5px; height: 38px; border-radius: 2px; background: #ccc; }
.done { position: absolute; left: 15px; top: 44px; width: 5px; height: 80px; border-radius: 2px; background: #3396ff; }
.knob { position: absolute; left: 8px; top: 41px; width: 19px; height: 8px; border-radius: 2px; background: #3396ff; }

.callout { position: absolute; left: 55px; top: 525px; width: 660px; height: 77px; padding: 1px 0 0 9px; border: 3px solid #8f7ee0; background: #fff; color: #000; font-size: 28px; font-weight: 350; line-height: 32px; letter-spacing: 1.02px; white-space: pre; }
.callout p { margin: 0; }
</style>
